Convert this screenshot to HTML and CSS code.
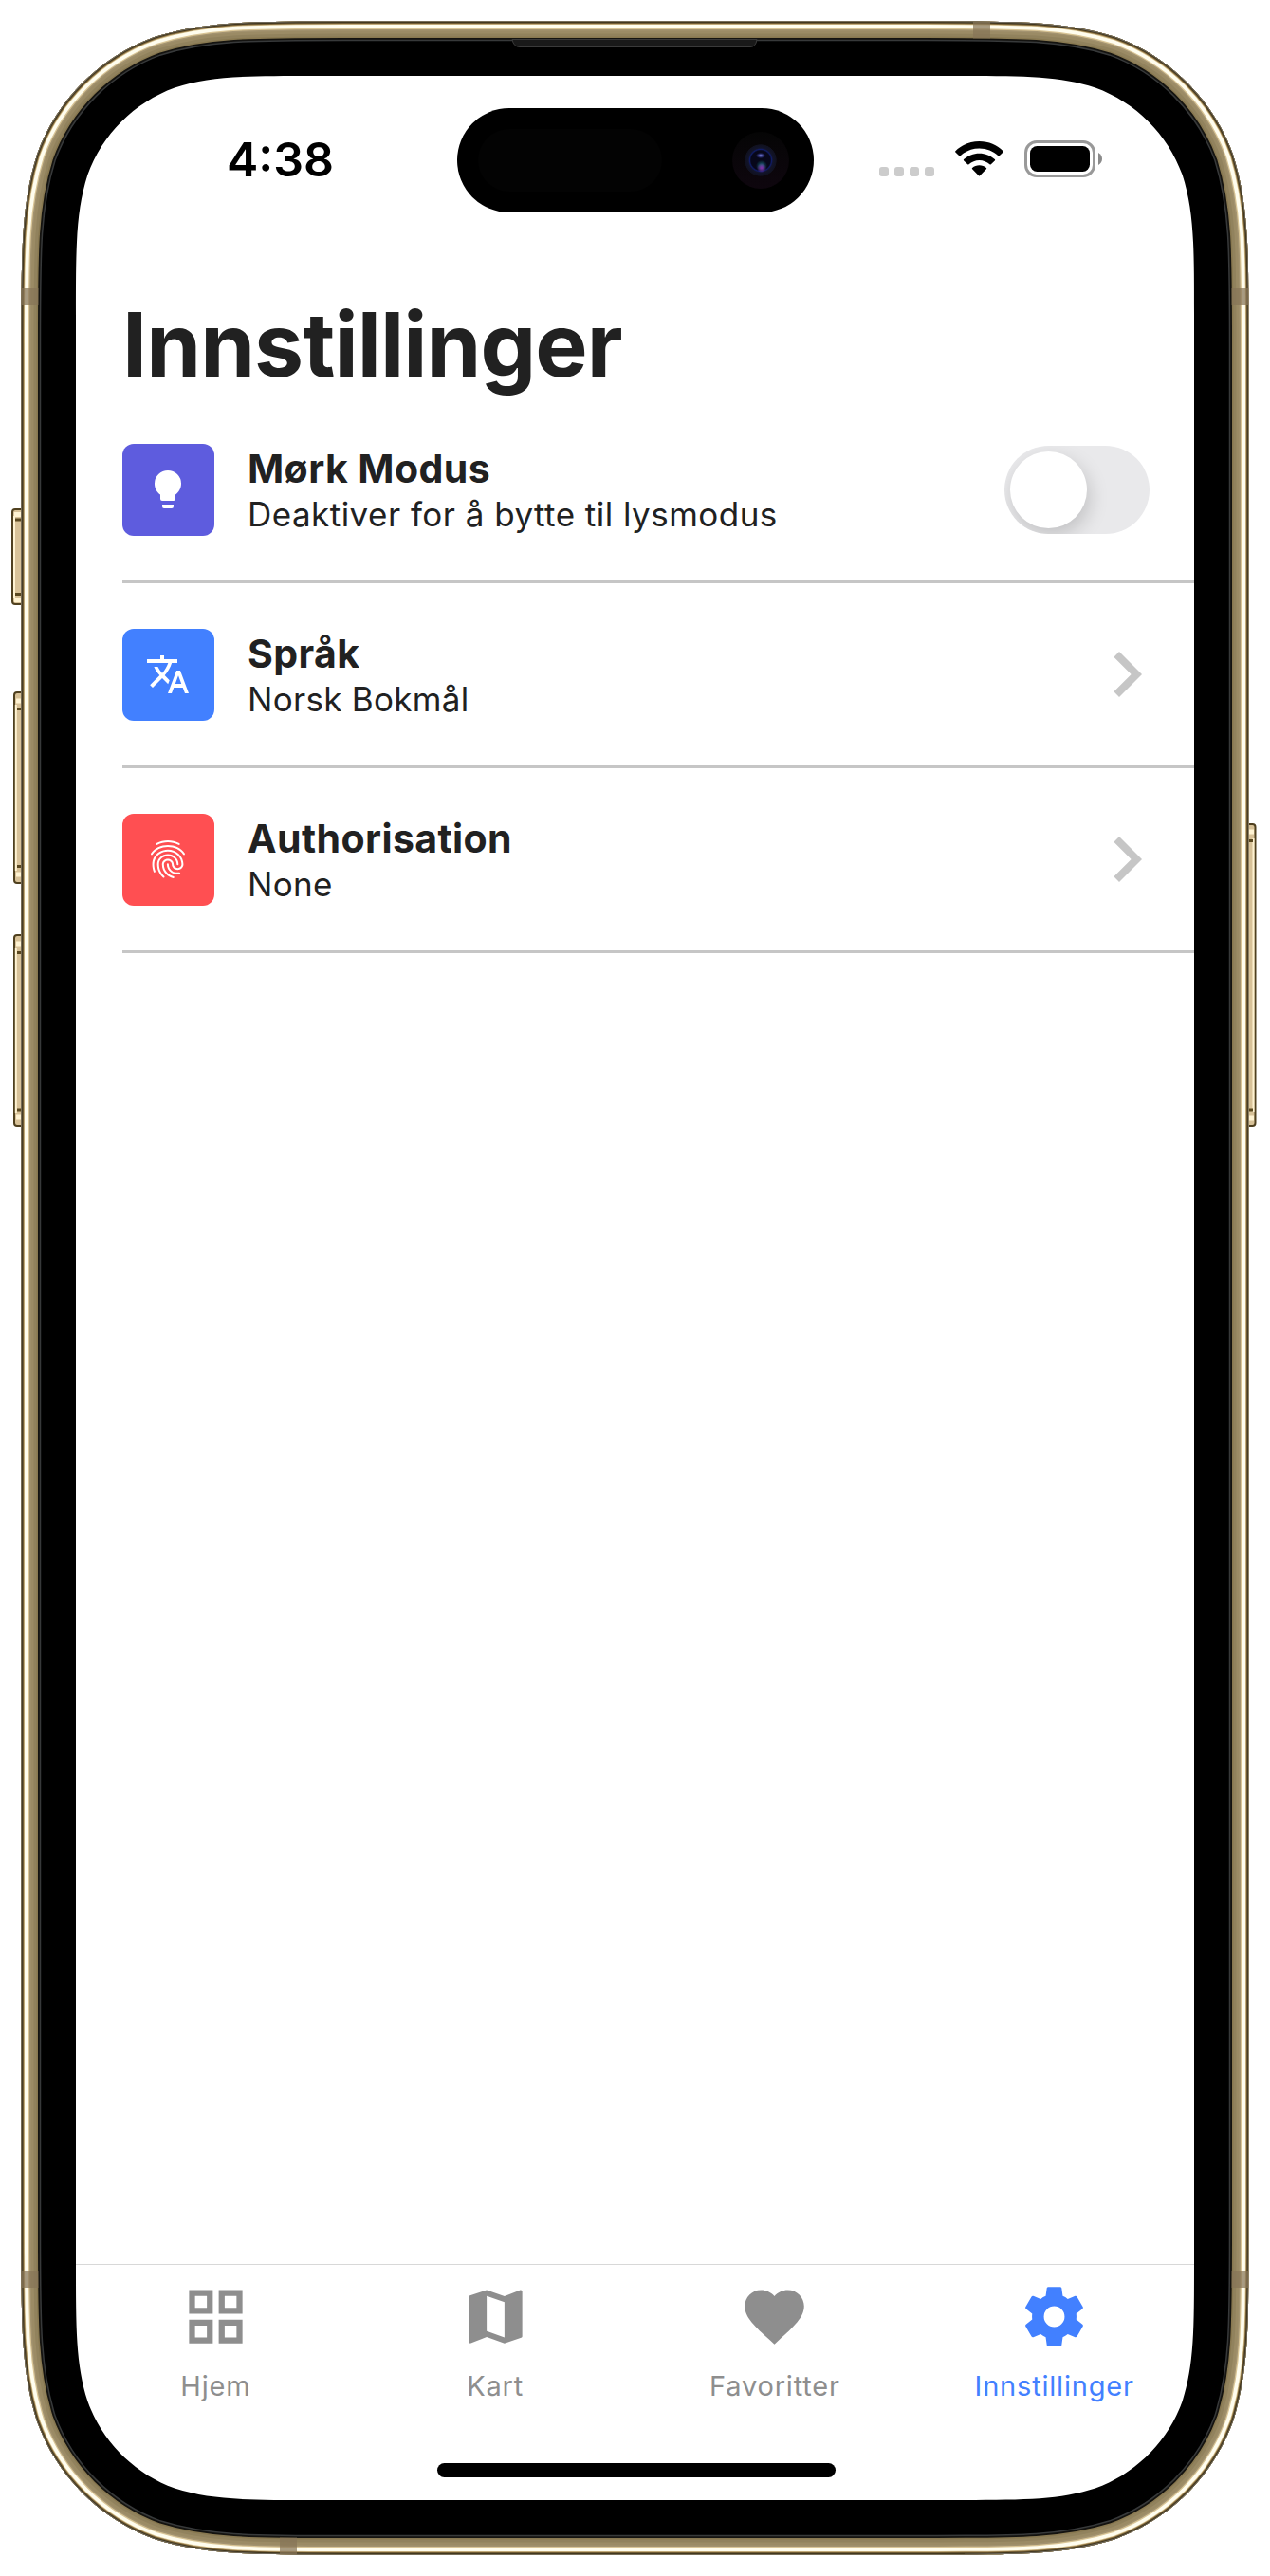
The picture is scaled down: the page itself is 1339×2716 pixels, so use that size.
FILE: index.html
```html
<!DOCTYPE html>
<html lang="nb">
<head>
<meta charset="utf-8">
<title>Innstillinger</title>
<link rel="stylesheet" href="styles.css">
</head>
<body>
<div class="device">
  <svg class="frame" viewBox="0 0 1339 2716" aria-hidden="true">
    <defs>
      <path id="body" d="M339.4 0H954.6c97.8 0 146.6 0 199.2 16.6c57.4 20.9 102.7 66.2 123.6 123.6c16.6 52.6 16.6 101.4 16.6 199.2V2331.6c0 97.8 0 146.6-16.6 199.2c-20.9 57.4-66.2 102.7-123.6 123.6c-52.6 16.6-101.4 16.6-199.2 16.6H339.4c-97.8 0-146.6 0-199.2-16.6c-57.4-20.9-102.7-66.2-123.6-123.6c-16.6-52.6-16.6-101.4-16.6-199.2V339.4c0-97.8 0-146.6 16.6-199.2c20.9-57.4 66.2-102.7 123.6-123.6c52.6-16.6 101.4-16.6 199.2-16.6z"/>
      <clipPath id="inside"><use href="#body"/></clipPath>
    </defs>

    <!-- side keys -->
    <g class="key">
      <rect x="13" y="537" width="18" height="100" rx="3"/>
      <rect x="15" y="730" width="18" height="201" rx="3"/>
      <rect x="15" y="986" width="18" height="201" rx="3"/>
      <rect x="1306" y="869" width="17.500" height="318" rx="3"/>
    </g>
    <g class="key-shine">
      <path d="M15 544v86M16.800 743v175M16.800 999v175M1321.500 884v288"/>
    </g>
    <g class="key-cap">
      <path d="M15 542.500h8M15 632.500h8M17 739h6M17 922h6M17 995h6M17 1178h6M1316 877h6M1316 1179h6"/>
    </g>
    <g class="key-notch">
      <path d="M16 548h7M16 626.500h7M18 747.500h5M18 913.500h5M18 1004.500h5M18 1170h5M1316 886.500h5M1316 1170h5"/>
    </g>

    <g transform="translate(22.500 22.500)" clip-path="url(#inside)">
      <use href="#body" fill="#000"/>
      <g fill="none">
        <use href="#body" stroke="#37393a" stroke-width="41.500"/>
        <use href="#body" stroke="#141310" stroke-width="38.500"/>
        <use href="#body" stroke="#887850" stroke-width="35"/>
        <use href="#body" stroke="#91825d" stroke-width="32"/>
        <use href="#body" stroke="#9b8b65" stroke-width="26"/>
        <use href="#body" stroke="#a39370" stroke-width="20"/>
        <use href="#body" stroke="#d9c596" stroke-width="17"/>
        <use href="#body" stroke="#fffdee" stroke-width="14.500"/>
        <use href="#body" stroke="#d8c391" stroke-width="7"/>
        <use href="#body" stroke="#82693c" stroke-width="5.500"/>
        <use href="#body" stroke="#42381f" stroke-width="3.600"/>
        <use href="#body" stroke="#777268" stroke-width="1.200"/>
      </g>
    </g>

    <!-- antenna bands -->
    <g fill="#877458" fill-opacity=".72">
      <path d="M22.500 304h18v18h-18zM1298.500 304h18v18h-18zM22.500 2394h18v18h-18zM1298.500 2394h18v18h-18zM1026 22.500h18v18h-18zM295 2675.500h18v18h-18z"/>
    </g>

    <!-- earpiece -->
    <path d="M540 41.500h258q-1 8-7 8H548q-6.500 0-8-8z" fill="#191919" stroke="#3a3a3a"/>

    <!-- display -->
    <path transform="translate(80 80)" fill="#fff" d="M252.200 0H926.800c72.600 0 108.900 0 148 12.400c42.700 15.500 76.300 49.100 91.800 91.800c12.400 39.100 12.400 75.400 12.400 148V2303.800c0 72.600 0 108.900-12.400 148c-15.500 42.700-49.100 76.300-91.800 91.800c-39.100 12.400-75.400 12.400-148 12.400H252.200c-72.600 0-108.900 0-148-12.400c-42.700-15.500-76.300-49.100-91.800-91.800c-12.400-39.100-12.400-75.400-12.400-148V252.200c0-72.600 0-108.900 12.400-148c15.500-42.700 49.100-76.300 91.800-91.800c39.100-12.400 75.400-12.400 148-12.400z"/>
  </svg>

  <div class="screen">
    <header class="status">
      <span class="time">4:38</span>
      <div class="island"><i class="sensor"></i><i class="camera"></i></div>
      <div class="indicators">
        <div class="signal"><i></i><i></i><i></i><i></i></div>
        <svg class="wifi" viewBox="0 0 51 37">
          <path d="M25.500 0C35.500 0 44.500 4 50.600 10.200q.6.700 0 1.300L46.700 15.300q-.6.600-1.300 0C40.200 10.300 33.200 7.400 25.500 7.400S10.800 10.300 5.600 15.300q-.7.600-1.300 0L.4 11.500q-.6-.6 0-1.300C6.500 4 15.500 0 25.500 0z"/>
          <path d="M25.500 12.700c6.300 0 12 2.400 16.300 6.400q.7.700 0 1.300l-4 3.900q-.6.600-1.300 0c-3-2.700-6.800-4.300-11-4.300s-8 1.600-11 4.300q-.7.600-1.300 0l-4-3.900q-.7-.6 0-1.300c4.300-4 10-6.400 16.300-6.400z"/>
          <path d="M25.500 25.200c2.800 0 5.400 1 7.400 2.800q.7.600 0 1.300l-6.800 6.900q-.6.600-1.200 0L18.100 29.300q-.7-.7 0-1.300c2-1.800 4.600-2.800 7.400-2.800z"/>
        </svg>
        <svg class="battery" viewBox="0 0 82 39">
          <rect x="1.500" y="1.500" width="72" height="36" rx="11.500" fill="none" stroke="#999" stroke-width="3"/>
          <rect x="6" y="6" width="63" height="27" rx="7.500"/>
          <path d="M78 13v13c2.500-1.200 4-3.700 4-6.500S80.500 14.200 78 13z" fill="#8a8a8a"/>
        </svg>
      </div>
    </header>

    <main class="content">
      <h1 class="title">Innstillinger</h1>
      <ul class="settings">
        <li class="row">
          <span class="tile tile-indigo"><svg viewBox="0 0 24 24"><path d="M12,2A7,7 0 0,0 5,9C5,11.380 6.190,13.470 8,14.740V17A1,1 0 0,0 9,18H15A1,1 0 0,0 16,17V14.740C17.810,13.470 19,11.380 19,9A7,7 0 0,0 12,2M9,21A1,1 0 0,0 10,22H14A1,1 0 0,0 15,21V20H9V21Z"/></svg></span>
          <div class="text"><span class="name">Mørk Modus</span><span class="detail detail-long">Deaktiver for å bytte til lysmodus</span></div>
          <span class="toggle" role="switch" aria-checked="false"></span>
        </li>
        <li class="row">
          <span class="tile tile-blue"><svg viewBox="0 0 24 24"><path d="M12.870,15.070L10.330,12.560L10.360,12.530C12.100,10.590 13.340,8.360 14.070,6H17V4H10V2H8V4H1V6H12.170C11.500,7.920 10.440,9.750 9,11.350C8.070,10.320 7.300,9.190 6.690,8H4.690C5.420,9.630 6.420,11.170 7.670,12.560L2.580,17.580L4,19L9,14L12.110,17.110L12.870,15.070M18.500,10H16.500L12,22H14L15.120,19H19.870L21,22H23L18.500,10M15.880,17L17.500,12.670L19.120,17H15.880Z"/></svg></span>
          <div class="text"><span class="name">Språk</span><span class="detail">Norsk Bokmål</span></div>
          <svg class="chevron" viewBox="0 0 24 24"><path d="M8.590 16.590L13.170 12 8.590 7.410 10 6l6 6-6 6z"/></svg>
        </li>
        <li class="row">
          <span class="tile tile-red"><svg viewBox="0 0 24 24"><path d="M17.81,4.47C17.73,4.47 17.65,4.45 17.58,4.41C15.66,3.42 14,3 12,3C10.03,3 8.15,3.47 6.44,4.41C6.2,4.54 5.9,4.45 5.76,4.21C5.63,3.97 5.72,3.66 5.96,3.53C7.82,2.5 9.86,2 12,2C14.14,2 16,2.47 18.04,3.5C18.29,3.65 18.38,3.95 18.25,4.19C18.16,4.37 18,4.47 17.81,4.47M3.5,9.72C3.4,9.72 3.3,9.69 3.21,9.63C3,9.47 2.93,9.16 3.09,8.93C4.08,7.53 5.34,6.43 6.84,5.66C10,4.04 14,4.03 17.15,5.65C18.65,6.42 19.91,7.5 20.9,8.9C21.06,9.12 21,9.44 20.78,9.6C20.55,9.76 20.24,9.71 20.08,9.5C19.18,8.22 18.04,7.23 16.69,6.54C13.82,5.07 10.15,5.07 7.29,6.55C5.93,7.25 4.79,8.25 3.89,9.5C3.81,9.65 3.66,9.72 3.5,9.72M9.75,21.79C9.62,21.79 9.5,21.74 9.4,21.64C8.53,20.77 8.06,20.21 7.39,19C6.7,17.77 6.34,16.27 6.34,14.66C6.34,11.69 8.88,9.27 12,9.27C15.12,9.27 17.66,11.69 17.66,14.66A0.5,0.5 0 0,1 17.16,15.16A0.5,0.5 0 0,1 16.66,14.66C16.66,12.24 14.57,10.27 12,10.27C9.43,10.27 7.34,12.24 7.34,14.66C7.34,16.1 7.66,17.43 8.27,18.5C8.91,19.66 9.35,20.15 10.12,20.93C10.31,21.13 10.31,21.44 10.12,21.64C10,21.74 9.88,21.79 9.75,21.79M16.92,19.94C15.73,19.94 14.68,19.64 13.82,19.05C12.33,18.04 11.44,16.4 11.44,14.66A0.5,0.5 0 0,1 11.94,14.16A0.5,0.5 0 0,1 12.44,14.66C12.44,16.07 13.16,17.4 14.38,18.22C15.09,18.7 15.92,18.93 16.92,18.93C17.16,18.93 17.56,18.9 17.96,18.83C18.23,18.78 18.5,18.96 18.54,19.24C18.59,19.5 18.41,19.77 18.13,19.82C17.56,19.93 17.06,19.94 16.92,19.94M14.91,22C14.87,22 14.82,22 14.78,22C13.19,21.54 12.15,20.95 11.06,19.88C9.66,18.5 8.89,16.64 8.89,14.66C8.89,13.04 10.27,11.72 11.97,11.72C13.67,11.72 15.05,13.04 15.05,14.66C15.05,15.73 16,16.6 17.13,16.6C18.28,16.6 19.21,15.73 19.21,14.66C19.21,10.89 15.96,7.83 11.96,7.83C9.12,7.83 6.5,9.41 5.35,11.86C4.96,12.67 4.76,13.62 4.76,14.66C4.76,15.44 4.83,16.67 5.43,18.27C5.53,18.53 5.4,18.82 5.14,18.91C4.88,19 4.59,18.87 4.5,18.62C4,17.31 3.77,16 3.77,14.66C3.77,13.46 4,12.37 4.45,11.42C5.78,8.63 8.73,6.82 11.96,6.82C16.5,6.82 20.21,10.33 20.21,14.65C20.21,16.27 18.83,17.59 17.13,17.59C15.43,17.59 14.05,16.27 14.05,14.65C14.05,13.58 13.12,12.71 11.97,12.71C10.82,12.71 9.89,13.58 9.89,14.65C9.89,16.36 10.55,17.96 11.76,19.16C12.71,20.1 13.62,20.62 15.03,21C15.3,21.08 15.45,21.36 15.38,21.62C15.33,21.85 15.12,22 14.91,22Z"/></svg></span>
          <div class="text"><span class="name">Authorisation</span><span class="detail">None</span></div>
          <svg class="chevron" viewBox="0 0 24 24"><path d="M8.590 16.590L13.170 12 8.590 7.410 10 6l6 6-6 6z"/></svg>
        </li>
      </ul>
    </main>

    <nav class="tabs">
      <a class="tab"><svg viewBox="0 0 24 24"><path fill-rule="evenodd" d="M3 3h8v8H3zM5 5v4h4V5zM13 3h8v8h-8zM15 5v4h4V5zM3 13h8v8H3zM5 15v4h4v-4zM13 13h8v8h-8zM15 15v4h4v-4z"/></svg><span>Hjem</span></a>
      <a class="tab"><svg viewBox="0 0 24 24"><path d="M15,19L9,16.890V5L15,7.110M20.500,3C20.440,3 20.390,3 20.340,3L15,5.100L9,3L3.360,4.900C3.150,4.970 3,5.150 3,5.380V20.500A0.500,0.500 0 0,0 3.500,21C3.550,21 3.610,21 3.660,20.970L9,18.900L15,21L20.640,19.100C20.850,19 21,18.850 21,18.620V3.500A0.500,0.500 0 0,0 20.500,3Z"/></svg><span>Kart</span></a>
      <a class="tab"><svg viewBox="0 0 24 24"><path d="M12,21.350L10.550,20.030C5.400,15.360 2,12.270 2,8.500C2,5.410 4.420,3 7.500,3C9.240,3 10.910,3.810 12,5.080C13.090,3.810 14.760,3 16.500,3C19.580,3 22,5.410 22,8.500C22,12.270 18.600,15.360 13.450,20.030L12,21.350Z"/></svg><span>Favoritter</span></a>
      <a class="tab active"><svg viewBox="0 0 24 24"><path d="M12,15.5A3.5,3.5 0 0,1 8.5,12A3.5,3.5 0 0,1 12,8.5A3.5,3.5 0 0,1 15.5,12A3.5,3.5 0 0,1 12,15.5M19.43,12.97C19.47,12.65 19.5,12.33 19.5,12C19.5,11.67 19.47,11.34 19.43,11L21.54,9.37C21.73,9.22 21.78,8.95 21.66,8.73L19.66,5.27C19.54,5.05 19.27,4.96 19.05,5.05L16.56,6.05C16.04,5.66 15.5,5.32 14.87,5.07L14.5,2.42C14.46,2.18 14.25,2 14,2H10C9.75,2 9.54,2.18 9.5,2.42L9.13,5.07C8.5,5.32 7.96,5.66 7.44,6.05L4.95,5.05C4.73,4.96 4.46,5.05 4.34,5.27L2.34,8.73C2.21,8.95 2.27,9.22 2.46,9.37L4.57,11C4.53,11.34 4.5,11.67 4.5,12C4.5,12.33 4.53,12.65 4.57,12.97L2.46,14.63C2.27,14.78 2.21,15.05 2.34,15.27L4.34,18.73C4.46,18.95 4.73,19.03 4.95,18.95L7.44,17.94C7.96,18.34 8.5,18.68 9.13,18.93L9.5,21.58C9.54,21.82 9.75,22 10,22H14C14.25,22 14.46,21.82 14.5,21.58L14.87,18.93C15.5,18.67 16.04,18.34 16.56,17.94L19.05,18.95C19.27,19.03 19.54,18.95 19.66,18.73L21.66,15.27C21.78,15.05 21.73,14.78 21.54,14.63L19.43,12.97Z"/></svg><span>Innstillinger</span></a>
    </nav>
    <div class="home"></div>
  </div>
</div>
</body>
</html>
```
FILE: styles.css
```css
* { box-sizing: border-box; }

body {
  margin: 0;
  background: #fff;
  color: #212121;
  font-family: Inter, "Liberation Sans", sans-serif;
}

.device {
  position: relative;
  width: 1339px;
  height: 2716px;
  padding: 80px;
  overflow: hidden;
}

.frame {
  position: absolute;
  inset: 0;
  width: 1339px;
  height: 2716px;
}

.key { fill: #d8c298; stroke: #4f401f; stroke-width: 2; }
.key-shine { fill: none; stroke: #fff3d2; stroke-width: 2; }
.key-cap { fill: none; stroke: #fff3d2; stroke-width: 5; }
.key-notch { fill: none; stroke: #5a481f; stroke-width: 3; }

.screen {
  position: relative;
  display: flex;
  flex-direction: column;
  width: 1179px;
  height: 2556px;
}

.status {
  display: grid;
  grid-template-columns: 402px 376px 1fr;
  height: 220px;
  padding-top: 34px;
}

.time {
  padding-left: 159px;
  color: #000;
  font-size: 50px;
  font-weight: 600;
  line-height: 108px;
}

.island {
  display: flex;
  align-items: center;
  justify-content: space-between;
  height: 110px;
  padding: 0 26px 0 22px;
  border-radius: 55px;
  background: #000;
}

.sensor { width: 194px; height: 66px; border-radius: 33px; background: #030303; }

.camera {
  width: 60px;
  height: 60px;
  border-radius: 50%;
  background:
    radial-gradient(ellipse 5px 3px at 30px 25px, #7d86e0, rgba(70, 75, 180, .5) 60%, transparent),
    radial-gradient(circle 5px at 31px 38px, #8a2bb0, transparent),
    radial-gradient(circle 6px at 31px 36px, #17707c, transparent),
    radial-gradient(circle 17px at 30px 30px, #07071a 60%, #101c66 68%, #12142a 76%, #10111f 96%, transparent),
    linear-gradient(#050505, #0e060e);
}

.indicators { display: flex; height: 39px; margin: 34px 0 0 69px; }

.signal { display: flex; gap: 6px; margin: 28px 22px 0 0; }
.signal i { width: 10px; height: 10px; border-radius: 3px; background: #ccc; }

.wifi { width: 51px; height: 37px; margin: 1px 22px 0 0; }
.battery { width: 82px; height: 39px; }

.content { flex: 1; padding-left: 49px; }

.title {
  height: 120px;
  margin: 0;
  font-size: 93px;
  font-weight: 700;
  letter-spacing: -.93px;
  line-height: 126px;
  white-space: nowrap;
}

.settings { margin: 0; padding: 0; list-style: none; }

.row {
  display: flex;
  align-items: center;
  height: 195px;
  padding-right: 47px;
  border-bottom: 3px solid #c6c6c6;
}

.tile {
  width: 97px;
  height: 97px;
  padding: 24px;
  border-radius: 12px;
}
.tile svg { display: block; width: 48px; height: 48px; fill: #fff; }
.tile-indigo { background: #5e5cde; }
.tile-blue { background: #4280ff; }
.tile-red { background: #ff4f52; }

.text {
  display: flex;
  flex: 1;
  flex-direction: column;
  padding: 3px 0 0 35px;
  white-space: nowrap;
}
.name { font-size: 41px; font-weight: 700; letter-spacing: .42px; line-height: 48px; }
.detail { font-size: 35px; letter-spacing: .3px; line-height: 48px; }
.detail-long { letter-spacing: .47px; }

.toggle {
  width: 153px;
  height: 93px;
  padding: 6px;
  overflow: hidden;
  border-radius: 47px;
  background: #e9e9eb;
}
.toggle::before {
  content: "";
  display: block;
  width: 81px;
  height: 81px;
  border-radius: 50%;
  background: #fff;
  box-shadow: 3px 8px 20px rgba(0, 0, 0, .17);
}

.chevron { width: 96px; height: 96px; margin-right: -24px; fill: #c6c6c6; }

.tabs {
  display: grid;
  grid-template-columns: repeat(4, 1fr);
  height: 210px;
  border-top: 1px solid #d8d8d8;
}
.tab {
  display: flex;
  flex-direction: column;
  align-items: center;
  padding-top: 17px;
  color: #8e8e8e;
  font-size: 29px;
  letter-spacing: .8px;
  line-height: 36px;
}
.tab svg { width: 75px; height: 75px; margin-bottom: 18px; fill: currentColor; }
.active { color: #4280ff; }

.home {
  width: 420px;
  height: 15px;
  margin: 0 auto 24px 381px;
  border-radius: 8px;
  background: #000;
}
```
